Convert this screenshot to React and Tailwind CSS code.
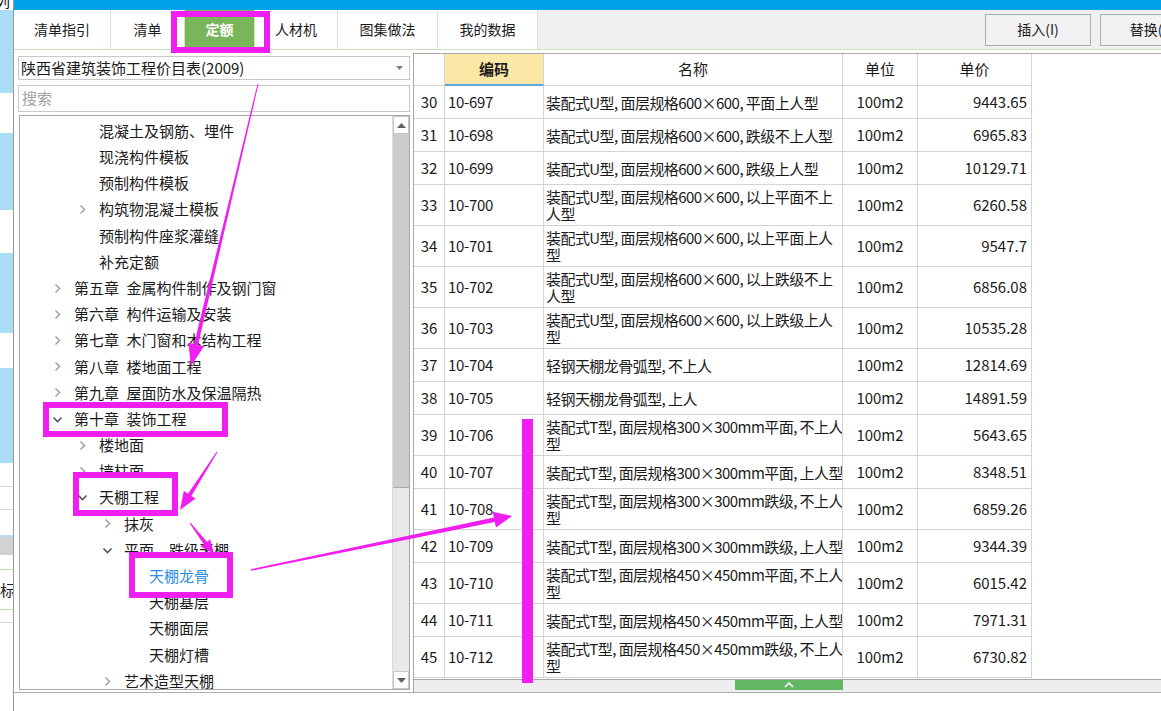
import React from 'react';

const MAG = '#f01ef0';

const tree = [
  { l: 1, t: '混凝土及钢筋、埋件' },
  { l: 1, t: '现浇构件模板' },
  { l: 1, t: '预制构件模板' },
  { l: 1, t: '构筑物混凝土模板', c: 'r' },
  { l: 1, t: '预制构件座浆灌缝' },
  { l: 1, t: '补充定额' },
  { l: 0, t: '第五章\u2002金属构件制作及钢门窗', c: 'r' },
  { l: 0, t: '第六章\u2002构件运输及安装', c: 'r' },
  { l: 0, t: '第七章\u2002木门窗和木结构工程', c: 'r' },
  { l: 0, t: '第八章\u2002楼地面工程', c: 'r' },
  { l: 0, t: '第九章\u2002屋面防水及保温隔热', c: 'r' },
  { l: 0, t: '第十章\u2002装饰工程', c: 'd' },
  { l: 1, t: '楼地面', c: 'r' },
  { l: 1, t: '墙柱面', c: 'r' },
  { l: 1, t: '天棚工程', c: 'd' },
  { l: 2, t: '抹灰', c: 'r' },
  { l: 2, t: '平面、跌级天棚', c: 'd' },
  { l: 3, t: '天棚龙骨', sel: true },
  { l: 3, t: '天棚基层' },
  { l: 3, t: '天棚面层' },
  { l: 3, t: '天棚灯槽' },
  { l: 2, t: '艺术造型天棚', c: 'r' },
];

const pads = ['pl-[30px]', 'pl-[55px]', 'pl-[80px]', 'pl-[105px]'];

const rows = [
  ['30', '10-697', ['装配式U型, 面层规格600×600, 平面上人型'], '9443.65'],
  ['31', '10-698', ['装配式U型, 面层规格600×600, 跌级不上人型'], '6965.83'],
  ['32', '10-699', ['装配式U型, 面层规格600×600, 跌级上人型'], '10129.71'],
  ['33', '10-700', ['装配式U型, 面层规格600×600, 以上平面不上', '人型'], '6260.58'],
  ['34', '10-701', ['装配式U型, 面层规格600×600, 以上平面上人', '型'], '9547.7'],
  ['35', '10-702', ['装配式U型, 面层规格600×600, 以上跌级不上', '人型'], '6856.08'],
  ['36', '10-703', ['装配式U型, 面层规格600×600, 以上跌级上人', '型'], '10535.28'],
  ['37', '10-704', ['轻钢天棚龙骨弧型, 不上人'], '12814.69'],
  ['38', '10-705', ['轻钢天棚龙骨弧型, 上人'], '14891.59'],
  ['39', '10-706', ['装配式T型, 面层规格300×300mm平面, 不上人', '型'], '5643.65'],
  ['40', '10-707', ['装配式T型, 面层规格300×300mm平面, 上人型'], '8348.51'],
  ['41', '10-708', ['装配式T型, 面层规格300×300mm跌级, 不上人', '型'], '6859.26'],
  ['42', '10-709', ['装配式T型, 面层规格300×300mm跌级, 上人型'], '9344.39'],
  ['43', '10-710', ['装配式T型, 面层规格450×450mm平面, 不上人', '型'], '6015.42'],
  ['44', '10-711', ['装配式T型, 面层规格450×450mm平面, 上人型'], '7971.31'],
  ['45', '10-712', ['装配式T型, 面层规格450×450mm跌级, 不上人', '型'], '6730.82'],
];

function LeftStrip() {
  return (
    <div className="w-[13px] shrink-0 flex flex-col overflow-hidden text-[15px] leading-none">
      <div className="h-[10px] overflow-hidden bg-white">
        <div className="-mt-[7px] -ml-[5px] text-[#111]">列</div>
      </div>
      <div className="h-[83px] bg-[#aadcf4]" />
      <div className="h-[40px] bg-white" />
      <div className="h-[77px] bg-[#aadcf4]" />
      <div className="h-[43px] bg-white" />
      <div className="h-[80px] bg-[#aadcf4]" />
      <div className="h-[35px] bg-white" />
      <div className="h-[95px] bg-[#aadcf4]" />
      <div className="h-[24px] bg-white border-b border-[#d8d8d8]" />
      <div className="h-[23px] bg-white border-b border-[#d8d8d8]" />
      <div className="h-[25px] bg-white" />
      <div className="h-[20px] bg-[#d2d2d2] border-t-2 border-[#b8def2]" />
      <div className="h-[15px] bg-white border-b border-[#bfe0b4]" />
      <div className="h-[40px] bg-white border-b border-[#bfe0b4] flex items-center">
        <span className="text-[#222]">标</span>
      </div>
      <div className="h-[13px] bg-white border-b border-[#d8d8d8]" />
      <div className="flex-1 bg-white" />
    </div>
  );
}

function TabBar() {
  const tabs = [
    ['清单指引', 'w-[97px]'],
    ['清单', 'w-[74px]'],
    ['定额', 'w-[70px]', true],
    ['人材机', 'w-[83px]'],
    ['图集做法', 'w-[100px]'],
    ['我的数据', 'w-[100px]'],
  ];
  return (
    <div className="h-[40px] flex bg-[#f0f0f0] border-b border-[#c9dfc0] overflow-hidden shrink-0">
      {tabs.map(([t, w, a]) => (
        <div
          key={t}
          className={`${w} shrink-0 flex items-center justify-center text-[14px] border-r border-[#d3e6cc] ${
            a ? 'bg-[#79b65b] text-white font-bold' : 'bg-white text-[#1a1a1a]'
          }`}
        >
          {t}
        </div>
      ))}
      <div className="w-[447px] shrink-0" />
      <div className="shrink-0 flex items-center gap-[9px]">
        <div className="w-[106px] h-[32px] border border-[#adadad] bg-[#f2f2f2] flex items-center justify-center text-[14px] text-[#1a1a1a]">
          插入(I)
        </div>
        <div className="w-[106px] h-[32px] border border-[#adadad] bg-[#f2f2f2] flex items-center justify-center text-[14px] text-[#1a1a1a]">
          替换(R)
        </div>
      </div>
    </div>
  );
}

function ChevRight() {
  return (
    <svg width="7" height="11" viewBox="0 0 7 11">
      <polyline points="1.5,1.5 5.5,5.5 1.5,9.5" fill="none" stroke="#a3a3a3" strokeWidth="1.6" />
    </svg>
  );
}
function ChevDown() {
  return (
    <svg width="11" height="7" viewBox="0 0 11 7">
      <polyline points="1.5,1.5 5.5,5.5 9.5,1.5" fill="none" stroke="#555" strokeWidth="1.6" />
    </svg>
  );
}

function LeftPanel() {
  return (
    <div className="w-[399px] shrink-0 flex flex-col pl-[4px] pr-[3px] pt-[6px]">
      <div className="h-[24px] border border-[#c8c8c8] bg-white flex items-center justify-between pl-[2px] pr-[6px] text-[15px] text-[#1a1a1a]">
        <span>陕西省建筑装饰工程价目表(2009)</span>
        <svg width="7" height="4" viewBox="0 0 7 4">
          <polygon points="0,0 7,0 3.5,4" fill="#808080" />
        </svg>
      </div>
      <div className="mt-[5px] h-[27px] border border-[#c8c8c8] bg-white flex items-center pl-[3px] text-[15px] text-[#a0a0a0]">
        搜索
      </div>
      <div className="mt-[3px] ml-[1px] h-[575px] border border-[#a8a8a8] bg-white flex">
        <div className="flex-1 overflow-hidden pt-[2px]">
          {tree.map((r, i) => (
            <div
              key={i}
              className={`h-[26.2px] flex items-center ${pads[r.l]} text-[15px] whitespace-nowrap ${
                r.sel ? 'text-[#2a8de8]' : 'text-[#1a1a1a]'
              }`}
            >
              <span className="w-[14px] shrink-0 flex items-center justify-center">
                {r.c === 'r' ? <ChevRight /> : r.c === 'd' ? <ChevDown /> : null}
              </span>
              <span className="ml-[10px]">{r.t}</span>
            </div>
          ))}
        </div>
        <div className="w-[17px] shrink-0 flex flex-col bg-[#e9e9e9] border-l border-[#dcdcdc]">
          <div className="h-[18px] bg-white border border-[#c8c8c8] flex items-center justify-center">
            <svg width="9" height="5" viewBox="0 0 9 5">
              <polygon points="0,5 9,5 4.5,0" fill="#606060" />
            </svg>
          </div>
          <div className="h-[354px] bg-[#cdcdcd] border-b border-[#a8a8a8]" />
          <div className="flex-1" />
          <div className="h-[18px] bg-white border border-[#c8c8c8] flex items-center justify-center">
            <svg width="9" height="5" viewBox="0 0 9 5">
              <polygon points="0,0 9,0 4.5,5" fill="#606060" />
            </svg>
          </div>
        </div>
      </div>
    </div>
  );
}

function RightPanel() {
  const line = 'border-[#d4d4d4]';
  return (
    <div className="flex-1 flex flex-col pt-[3px]">
      <div className="flex-1 flex flex-col border-t border-l border-[#a8a8a8] bg-white">
        <div className="h-[32px] shrink-0 flex text-[15px] text-[#1a1a1a]">
          <div className={`w-[31px] shrink-0 border-r border-b ${line}`} />
          <div className="w-[99px] shrink-0 border-r border-[#d4d4d4] border-b-2 border-b-[#5aa7e0] bg-[#fde7a7] flex items-center justify-center font-bold">
            编码
          </div>
          <div className={`w-[299px] shrink-0 border-r border-b ${line} flex items-center justify-center`}>名称</div>
          <div className={`w-[75px] shrink-0 border-r border-b ${line} flex items-center justify-center`}>单位</div>
          <div className={`w-[114px] shrink-0 border-r border-b ${line} flex items-center justify-center`}>单价</div>
        </div>
        <div className="flex-1 overflow-hidden">
          {rows.map(([n, code, lines, price]) => (
            <div
              key={n}
              className={`flex ${lines.length > 1 ? 'h-[41px]' : 'h-[33px]'} text-[15px] text-[#1a1a1a]`}
            >
              <div className={`w-[31px] shrink-0 border-r border-b ${line} flex items-center justify-center`}>{n}</div>
              <div className={`w-[99px] shrink-0 border-r border-b ${line} flex items-center pl-[3px] tracking-[-0.3px]`}>{code}</div>
              <div className={`w-[299px] shrink-0 border-r border-b ${line} flex flex-col justify-center pl-[2px] leading-[18px] whitespace-nowrap overflow-hidden tracking-[-0.55px]`}>
                {lines.map((l, i) => (
                  <span key={i} className="h-[17px]">{l}</span>
                ))}
              </div>
              <div className={`w-[75px] shrink-0 border-r border-b ${line} flex items-center justify-center`}>100m2</div>
              <div className={`w-[114px] shrink-0 border-r border-b ${line} flex items-center justify-end pr-[4px]`}>{price}</div>
            </div>
          ))}
        </div>
        <div className="h-[13px] shrink-0 border-t border-[#a8a8a8] bg-[#eeeeee] flex">
          <div className="ml-[321px] w-[108px] h-[10px] bg-[#62b863] flex items-center justify-center">
            <svg width="10" height="6" viewBox="0 0 10 6">
              <polyline points="1,5 5,1 9,5" fill="none" stroke="#ffffff" strokeWidth="1.5" />
            </svg>
          </div>
        </div>
      </div>
    </div>
  );
}

function arrowPts(x1, y1, x2, y2, w0, w1, hl, hw) {
  const dx = x2 - x1;
  const dy = y2 - y1;
  const L = Math.hypot(dx, dy);
  const ux = dx / L;
  const uy = dy / L;
  const nx = -uy;
  const ny = ux;
  const bx = x2 - ux * hl;
  const by = y2 - uy * hl;
  const p = [
    [x1 + (nx * w0) / 2, y1 + (ny * w0) / 2],
    [bx + (nx * w1) / 2, by + (ny * w1) / 2],
    [bx + (nx * hw) / 2, by + (ny * hw) / 2],
    [x2, y2],
    [bx - (nx * hw) / 2, by - (ny * hw) / 2],
    [bx - (nx * w1) / 2, by - (ny * w1) / 2],
    [x1 - (nx * w0) / 2, y1 - (ny * w0) / 2],
  ];
  return p.map((q) => q[0].toFixed(1) + ',' + q[1].toFixed(1)).join(' ');
}

function Annotations() {
  return (
    <svg className="absolute inset-0 pointer-events-none" width="1161" height="711" viewBox="0 0 1161 711">
      <rect x="174" y="14" width="93" height="36" fill="none" stroke={MAG} strokeWidth="6" />
      <rect x="46" y="405" width="179" height="29" fill="none" stroke={MAG} strokeWidth="6" />
      <rect x="79" y="478" width="96" height="8" fill="#ffffff" />
      <rect x="76" y="475" width="99" height="38" fill="none" stroke={MAG} strokeWidth="6" />
      <rect x="135" y="558" width="92" height="8" fill="#ffffff" />
      <rect x="132" y="555" width="98" height="40" fill="none" stroke={MAG} strokeWidth="6" />
      <polygon points={arrowPts(258, 84, 191, 366, 1, 4, 22, 16)} fill={MAG} />
      <polygon points={arrowPts(217, 452, 180, 510, 1, 4, 18, 14)} fill={MAG} />
      <polygon points={arrowPts(190, 523, 214, 554, 1, 4, 14, 12)} fill={MAG} />
      <polygon points={arrowPts(251, 570, 512, 516, 1.5, 4.5, 18, 16)} fill={MAG} />
      <rect x="522" y="419" width="11" height="264" fill={MAG} />
    </svg>
  );
}

export default function App() {
  return (
    <div className="relative w-[1161px] h-[711px] overflow-hidden bg-white flex font-['Noto_Sans_CJK_SC',sans-serif] text-[#1a1a1a]">
      <LeftStrip />
      <div className="w-[1148px] shrink-0 flex flex-col border-l border-[#9a9a9a]">
        <div className="h-[10px] shrink-0 bg-[#00a2e8]" />
        <TabBar />
        <div className="h-[643px] shrink-0 flex border-b border-[#b0b0b0]">
          <LeftPanel />
          <RightPanel />
        </div>
        <div className="flex-1 bg-white" />
      </div>
      <Annotations />
    </div>
  );
}
